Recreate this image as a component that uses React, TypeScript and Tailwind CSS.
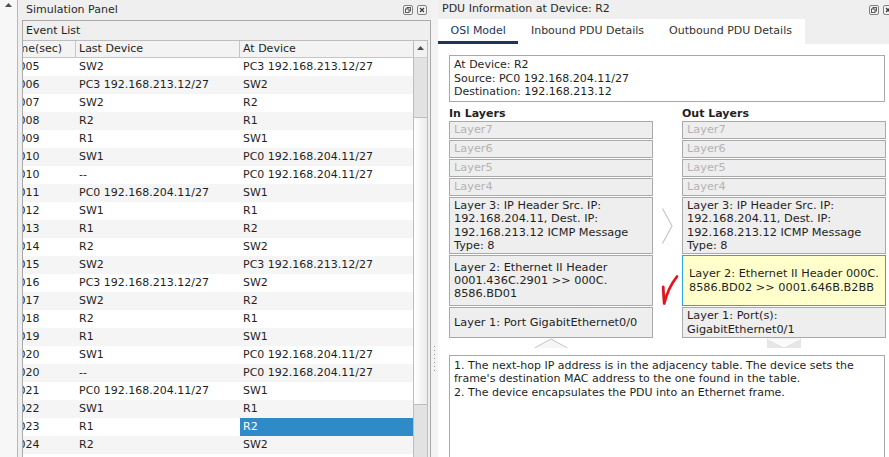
import React from 'react';

const PC0 = 'PC0 192.168.204.11/27';
const PC3 = 'PC3 192.168.213.12/27';

// [time, last device, at device]
const ROWS: [string, string, string][] = [
  ['0.005', 'SW2', PC3],
  ['0.006', PC3, 'SW2'],
  ['0.007', 'SW2', 'R2'],
  ['0.008', 'R2', 'R1'],
  ['0.009', 'R1', 'SW1'],
  ['0.010', 'SW1', PC0],
  ['0.010', '--', PC0],
  ['0.011', PC0, 'SW1'],
  ['0.012', 'SW1', 'R1'],
  ['0.013', 'R1', 'R2'],
  ['0.014', 'R2', 'SW2'],
  ['0.015', 'SW2', PC3],
  ['0.016', PC3, 'SW2'],
  ['0.017', 'SW2', 'R2'],
  ['0.018', 'R2', 'R1'],
  ['0.019', 'R1', 'SW1'],
  ['0.020', 'SW1', PC0],
  ['0.020', '--', PC0],
  ['0.021', PC0, 'SW1'],
  ['0.022', 'SW1', 'R1'],
  ['0.023', 'R1', 'R2'],
  ['0.024', 'R2', 'SW2'],
];
const SELECTED = 20;

const FloatIcon = () => (
  <svg width="10" height="10" viewBox="0 0 10 10">
    <rect x="0.5" y="0.5" width="9" height="9" rx="1.5" fill="#f4f4f4" stroke="#808080" />
    <rect x="4" y="2.5" width="3.5" height="3.5" fill="none" stroke="#4a4a4a" strokeWidth="0.9" />
    <rect x="2.5" y="4" width="3.5" height="3.5" fill="#f4f4f4" stroke="#4a4a4a" strokeWidth="0.9" />
  </svg>
);

const CloseIcon = () => (
  <svg width="10" height="10" viewBox="0 0 10 10">
    <rect x="0.5" y="0.5" width="9" height="9" rx="1.5" fill="#f4f4f4" stroke="#808080" />
    <path d="M3 3 L7 7 M7 3 L3 7" stroke="#3a3a3a" strokeWidth="1.3" />
  </svg>
);

const UpTri = () => (
  <svg width="7" height="4" viewBox="0 0 7 4">
    <path d="M0 4 L3.5 0 L7 4Z" fill="#4d4d4d" />
  </svg>
);

function EventList() {
  return (
    <div className="ml-[4px] flex min-h-0 flex-1 flex-col border-x border-t border-[#a9a9a9]">
      <div className="h-[19px] shrink-0 pl-[3px] leading-[19px]">Event List</div>
      <div className="mr-[2px] flex min-h-0 flex-1 border-t border-[#bdbdbd] bg-white">
        {/* table is scrolled sideways, so the time column is cut */}
        <div className="min-w-0 flex-1 overflow-hidden">
          <div className="-ml-[18px] w-[408px]">
            <div className="grid h-[17px] grid-cols-[71px_164px_173px] border-b border-[#c6c6c6] bg-[#f3f3f3] leading-[16px]">
              <div className="border-r border-[#c6c6c6] pl-[3px]">Time(sec)</div>
              <div className="border-r border-[#c6c6c6] pl-[3px]">Last Device</div>
              <div className="pl-[3px]">At Device</div>
            </div>
            {ROWS.map(([t, last, at], i) => (
              <div
                key={i}
                className={`grid h-[18px] grid-cols-[71px_164px_173px] leading-[18px] ${i % 2 ? 'bg-[#f5f5f5]' : 'bg-white'}`}
              >
                <div className="whitespace-nowrap pl-[3px]">{t}</div>
                <div className="whitespace-nowrap pl-[3px]">{last}</div>
                <div className={`whitespace-nowrap pl-[3px] ${i === SELECTED ? 'bg-[#2f8bc8] text-white' : ''}`}>{at}</div>
              </div>
            ))}
          </div>
        </div>
        {/* vertical scrollbar */}
        <div className="flex w-[15px] shrink-0 flex-col border-x border-[#bdbdbd]">
          <div className="flex h-[17px] shrink-0 items-center justify-center border-b border-[#cfcfcf] bg-[#f2f2f2] pb-[3px]">
            <UpTri />
          </div>
          <div className="h-[59px] shrink-0 bg-[#e2e2e2]" />
          <div className="h-[288px] shrink-0 border-y border-[#bdbdbd] bg-linear-to-r from-white to-[#ebebeb]" />
          <div className="flex-1 bg-[#e2e2e2]" />
        </div>
      </div>
    </div>
  );
}

const dimBox = 'mb-[1px] h-[18px] border border-[#a9a9a9] bg-[#eeeeee] pl-[4px] leading-[16px] text-[#b3b3b3]';
const boxBase = 'flex flex-col justify-center whitespace-nowrap border border-[#a9a9a9] bg-[#eeeeee] pl-[4px] leading-[13.3px]';

function Layers({ title, l3, l2, l1, out }: { title: string; l3: string[]; l2: string[]; l1: string[]; out?: boolean }) {
  return (
    <div className="flex w-[204px] flex-col">
      <div className="h-[14px] text-[11px] font-bold leading-[14px]">{title}</div>
      <div className={dimBox}>Layer7</div>
      <div className={dimBox}>Layer6</div>
      <div className={dimBox}>Layer5</div>
      <div className={dimBox}>Layer4</div>
      <div className={`mb-[1px] h-[57px] ${boxBase}`}>
        {l3.map((s) => (
          <div key={s}>{s}</div>
        ))}
      </div>
      <div
        className={
          out
            ? 'mb-[1px] flex h-[51px] flex-col justify-center whitespace-nowrap border border-[#2aa7d9] bg-[#ffffcc] pl-[6px] leading-[13.3px]'
            : `mb-[1px] h-[51px] ${boxBase}`
        }
      >
        {l2.map((s) => (
          <div key={s}>{s}</div>
        ))}
      </div>
      <div className={`h-[31px] ${boxBase}`}>
        {l1.map((s) => (
          <div key={s}>{s}</div>
        ))}
      </div>
    </div>
  );
}

const L3 = ['Layer 3: IP Header Src. IP:', '192.168.204.11, Dest. IP:', '192.168.213.12 ICMP Message', 'Type: 8'];

function OsiModel() {
  return (
    <div className="flex min-h-0 flex-1 flex-col pl-[11px] pt-[11px]">
      <div className="h-[47px] w-[436px] shrink-0 border border-[#a9a9a9] px-[4px] pt-[2px] leading-[13.5px]">
        <div>At Device: R2</div>
        <div>Source: PC0 192.168.204.11/27</div>
        <div>Destination: 192.168.213.12</div>
      </div>

      <div className="mt-[5px] flex shrink-0 text-[11.3px]">
        <Layers
          title="In Layers"
          l3={L3}
          l2={['Layer 2: Ethernet II Header', '0001.436C.2901 >> 000C.', '8586.BD01']}
          l1={['Layer 1: Port GigabitEthernet0/0']}
        />
        <div className="flex w-[29px] flex-col pt-[90px]">
          <div className="flex h-[58px] items-center justify-center">
            <svg width="11" height="36" viewBox="0 0 11 36">
              <path d="M0.5 0.5 L10 18 L0.5 35.5" fill="none" stroke="#c6c6c6" strokeWidth="1.2" />
            </svg>
          </div>
          {/* hand-drawn red mark */}
          <div className="flex h-[52px] items-end pb-[1px] pl-[8px]">
            <svg width="18" height="32" viewBox="0 0 18 32">
              <path
                d="M2.2 13 Q2.6 22 3.2 29.5 Q7 14 16 2.5"
                fill="none"
                stroke="#e2141c"
                strokeWidth="2.8"
                strokeLinecap="round"
                strokeLinejoin="round"
              />
            </svg>
          </div>
        </div>
        <Layers
          out
          title="Out Layers"
          l3={L3}
          l2={['Layer 2: Ethernet II Header 000C.', '8586.BD02 >> 0001.646B.B2BB']}
          l1={['Layer 1: Port(s):', 'GigabitEthernet0/1']}
        />
      </div>

      {/* layer navigation arrows */}
      <div className="flex h-[10px] w-[437px] shrink-0">
        <div className="flex w-[204px] justify-center">
          <svg width="34" height="10" viewBox="0 0 34 10">
            <path d="M0.5 10 L17 1 L33.5 10" fill="#f6f6f6" stroke="#c4c4c4" />
          </svg>
        </div>
        <div className="w-[29px]" />
        <div className="flex w-[204px] justify-center">
          <svg width="34" height="10" viewBox="0 0 34 10">
            <rect x="0" y="0" width="34" height="10" fill="#e6e6e6" />
            <path d="M1 0.5 L17 8.5 L33 0.5" fill="#fafafa" stroke="#ffffff" strokeWidth="1.2" />
          </svg>
        </div>
      </div>

      <div className="mt-[7px] min-h-0 w-[436px] flex-1 border border-b-0 border-[#a9a9a9] px-[4px] pt-[3px] leading-[13.4px]">
        <div>1. The next-hop IP address is in the adjacency table. The device sets the</div>
        <div>frame's destination MAC address to the one found in the table.</div>
        <div>2. The device encapsulates the PDU into an Ethernet frame.</div>
      </div>
    </div>
  );
}

export default function App() {
  return (
    <div className="flex h-[457px] w-[889px] overflow-hidden bg-[#efefef] font-['DejaVu_Sans',sans-serif] text-[11px] text-[#1f1f1f]">
      {/* far-left scroller */}
      <div className="flex w-[18px] shrink-0 justify-center border-r border-[#b8b8b8] bg-[#f7f7f7] pt-[3px]">
        <UpTri />
      </div>

      {/* Simulation Panel */}
      <div className="flex w-[413px] shrink-0 flex-col">
        <div className="flex h-[20px] shrink-0 items-center pl-[8px] pr-[4px] text-[#2a2a2a]">
          <span className="flex-1">Simulation Panel</span>
          <div className="flex gap-[4px]">
            <FloatIcon />
            <CloseIcon />
          </div>
        </div>
        <EventList />
      </div>

      {/* splitter */}
      <div className="flex w-[7px] shrink-0 flex-col items-center gap-[3px] bg-[#f3f3f3] pt-[346px]">
        {[0, 1, 2, 3, 4, 5, 6].map((d) => (
          <div key={d} className="h-[1px] w-[1px] bg-[#9a9a9a]" />
        ))}
      </div>

      {/* PDU Information */}
      <div className="flex w-[460px] shrink-0 flex-col bg-white">
        <div className="flex h-[19px] shrink-0 items-center bg-[#efefef] pl-[4px] pr-[5px] text-[#2a2a2a]">
          <span className="flex-1">PDU Information at Device: R2</span>
          <div className="flex gap-[4px]">
            <FloatIcon />
            <CloseIcon />
          </div>
        </div>
        <div className="flex h-[25px] shrink-0 bg-[#efefef]">
          <div className="flex w-[367px] bg-white text-[#333333]">
            <div className="flex h-full items-center border-b-[3px] border-[#1c3657] px-[12.5px] pt-[3px] text-[#1c3657]">OSI Model</div>
            <div className="flex h-full items-center px-[12.5px]">Inbound PDU Details</div>
            <div className="flex h-full items-center px-[12.5px]">Outbound PDU Details</div>
          </div>
        </div>
        <OsiModel />
      </div>
    </div>
  );
}
